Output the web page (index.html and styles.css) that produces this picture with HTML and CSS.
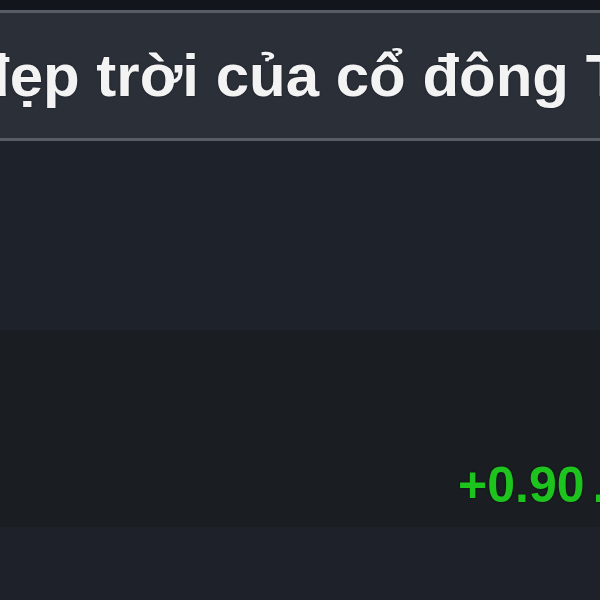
FILE: index.html
```html
<!DOCTYPE html>
<html lang="vi">
<head>
<meta charset="utf-8">
<link rel="stylesheet" href="styles.css">
</head>
<body>
<div class="page">
  <div class="topbar"></div>
  <div class="header">
    <h1 class="title">đẹp trời của cổ đông Tập đoàn</h1>
  </div>
  <div class="panel"></div>
  <div class="quote">
    <span class="change">+0.90 .</span>
  </div>
  <div class="footer"></div>
</div>
</body>
</html>
```
FILE: styles.css
```css
html, body {
  margin: 0;
  padding: 0;
  background: #1e2129;
  overflow: hidden;
}
.page {
  width: 600px;
  height: 600px;
  display: flex;
  flex-direction: column;
  overflow: hidden;
  font-family: "Liberation Sans", Arial, sans-serif;
}
.topbar {
  height: 10px;
  background: #12151b;
  flex: none;
}
.header {
  flex: none;
  height: 125px;
  background: #2b2f38;
  border-top: 3px solid #575c65;
  border-bottom: 3px solid #575c65;
  overflow: hidden;
}
.title {
  margin: 0 0 0 -27px;
  padding-top: 33px;
  font-size: 60px;
  line-height: 60px;
  font-weight: bold;
  color: #f3f3f3;
  white-space: nowrap;
  text-shadow: 0 0 2px #15181e;
}
.panel {
  flex: none;
  height: 189px;
  background: #1e222a;
}
.quote {
  flex: none;
  height: 197px;
  background: #1a1d21;
  display: flex;
  align-items: flex-end;
  padding-left: 458px;
  box-sizing: border-box;
  padding-bottom: 17px;
  overflow: hidden;
}
.change {
  font-size: 50px;
  line-height: 50px;
  font-weight: bold;
  color: #1ec41e;
  white-space: nowrap;
  word-spacing: -6px;
  text-shadow: 0 0 2px #0a0c0e;
}
.footer {
  flex: 1;
  background: #1e2129;
}
```
